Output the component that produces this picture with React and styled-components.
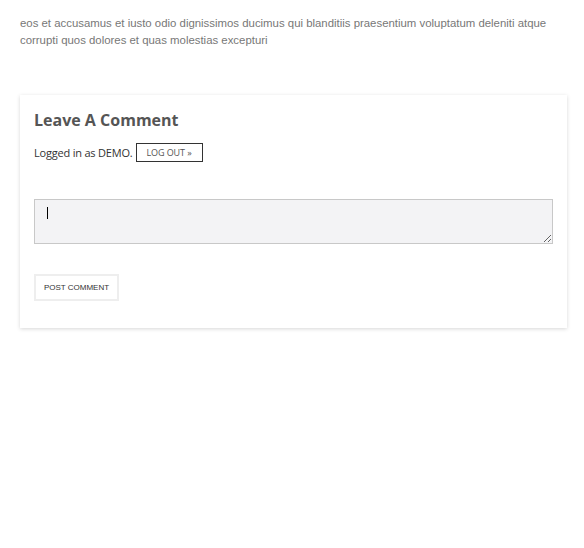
import React from "react";
import styled, { createGlobalStyle } from "styled-components";

const Global = createGlobalStyle`
  html, body { margin: 0; padding: 0; background: #fff; }
  body { width: 584px; height: 548px; overflow: hidden; }
`;

const Page = styled.div`
  padding: 15px 17px 0 20px;
`;

const Intro = styled.p`
  margin: 0;
  font-family: "Liberation Sans", Arial, sans-serif;
  font-size: 11.4px;
  line-height: 17px;
  color: #777;
`;

const Card = styled.section`
  margin-top: 46px;
  background: #fff;
  box-shadow: 0 1px 4px rgba(0, 0, 0, 0.16);
  padding: 14px 14px 27px 14px;
  display: flex;
  flex-direction: column;
`;

const Title = styled.h3`
  margin: 0;
  font-family: "Open Sans", sans-serif;
  font-weight: 700;
  font-size: 16px;
  line-height: 22px;
  color: #555;
`;

const LoggedRow = styled.div`
  margin-top: 12px;
  display: flex;
  align-items: center;
  gap: 3px;
  font-family: "Open Sans", sans-serif;
  font-size: 11px;
  letter-spacing: -0.2px;
  color: #333;
`;

const LogOut = styled.a`
  display: inline-flex;
  align-items: center;
  justify-content: center;
  box-sizing: border-box;
  width: 67px;
  height: 19px;
  border: 1px solid #333;
  font-family: "Open Sans", sans-serif;
  font-size: 9px;
  letter-spacing: -0.1px;
  color: #555;
  text-transform: uppercase;
  text-decoration: none;
`;

const TextArea = styled.textarea`
  margin-top: 37px;
  box-sizing: border-box;
  width: 100%;
  height: 45px;
  background: #f3f3f5;
  border: 1px solid #c8c8c8;
  border-radius: 0;
  padding: 6px 8px;
  font-family: "Open Sans", sans-serif;
  font-size: 12px;
  outline: none;
  resize: vertical;
  display: block;
`;

const Caret = styled.span`
  display: block;
  width: 1px;
  height: 12px;
  background: #000;
`;

const FieldWrap = styled.div`
  position: relative;
`;

const CaretSpot = styled.div`
  position: absolute;
  left: 13px;
  top: 45px;
`;

const PostButton = styled.button`
  margin-top: 30px;
  align-self: flex-start;
  box-sizing: border-box;
  width: 85px;
  height: 27px;
  background: #fff;
  border: 2px solid #eee;
  padding: 0;
  font-family: "Liberation Sans", Arial, sans-serif;
  font-size: 8px;
  color: #333;
  text-transform: uppercase;
`;

export default function App() {
  return (
    <>
      <Global />
      <Page>
        <Intro>
          eos et accusamus et iusto odio dignissimos ducimus qui blanditiis praesentium voluptatum deleniti atque corrupti quos dolores et quas molestias excepturi
        </Intro>
        <Card>
          <Title>Leave A Comment</Title>
          <LoggedRow>
            Logged in as DEMO. <LogOut href="#">Log out »</LogOut>
          </LoggedRow>
          <FieldWrap>
            <TextArea />
            <CaretSpot>
              <Caret />
            </CaretSpot>
          </FieldWrap>
          <PostButton>Post Comment</PostButton>
        </Card>
      </Page>
    </>
  );
}
